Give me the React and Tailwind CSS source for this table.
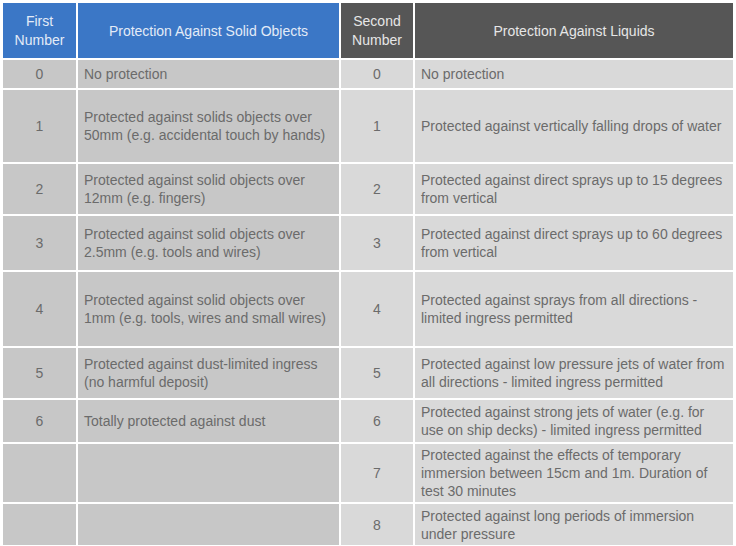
const rows = [
  ["0", "No protection", "0", "No protection"],
  [
    "1",
    "Protected against solids objects over 50mm (e.g. accidental touch by hands)",
    "1",
    "Protected against vertically falling drops of water",
  ],
  [
    "2",
    "Protected against solid objects over 12mm (e.g. fingers)",
    "2",
    "Protected against direct sprays up to 15 degrees from vertical",
  ],
  [
    "3",
    "Protected against solid objects over 2.5mm (e.g. tools and wires)",
    "3",
    "Protected against direct sprays up to 60 degrees from vertical",
  ],
  [
    "4",
    "Protected against solid objects over 1mm (e.g. tools, wires and small wires)",
    "4",
    "Protected against sprays from all directions - limited ingress permitted",
  ],
  [
    "5",
    "Protected against dust-limited ingress (no harmful deposit)",
    "5",
    "Protected against low pressure jets of water from all directions - limited ingress permitted",
  ],
  [
    "6",
    "Totally protected against dust",
    "6",
    "Protected against strong jets of water (e.g. for use on ship decks) - limited ingress permitted",
  ],
  [
    "",
    "",
    "7",
    "Protected against the effects  of temporary immersion between 15cm and 1m. Duration of test 30 minutes",
  ],
  [
    "",
    "",
    "8",
    "Protected against long periods of immersion under pressure",
  ],
];

export default function App() {
  return (
    <div className="w-[736px] h-[546px] bg-white pt-[3px] pl-[3px] font-['Liberation_Sans',Arial,sans-serif] text-[14px] leading-[18px] text-[#6b6b6b]">
      <div className="grid grid-cols-[73px_261px_72px_318px] grid-rows-[55px_28px_72px_50px_54px_74px_50px_42px_58px_41px] gap-[2px]">
        <div className="bg-[#3b77c6] text-[#e3ebf7] flex items-center justify-center text-center leading-[19px]">
          First
          <br />
          Number
        </div>
        <div className="bg-[#3b77c6] text-[#e3ebf7] flex items-center justify-center">
          Protection Against Solid Objects
        </div>
        <div className="bg-[#565656] text-[#e6e6e6] flex items-center justify-center text-center leading-[19px]">
          Second
          <br />
          Number
        </div>
        <div className="bg-[#565656] text-[#e6e6e6] flex items-center justify-center">
          Protection Against Liquids
        </div>
        {rows.map((r, i) => (
          <div key={i} className="contents">
            <div className="bg-[#c7c7c7] flex items-center justify-center">{r[0]}</div>
            <div className="bg-[#c7c7c7] flex items-center px-[6px]">{r[1]}</div>
            <div className="bg-[#d9d9d9] flex items-center justify-center">{r[2]}</div>
            <div className="bg-[#d9d9d9] flex items-center px-[6px] whitespace-pre-line">{r[3]}</div>
          </div>
        ))}
      </div>
    </div>
  );
}
